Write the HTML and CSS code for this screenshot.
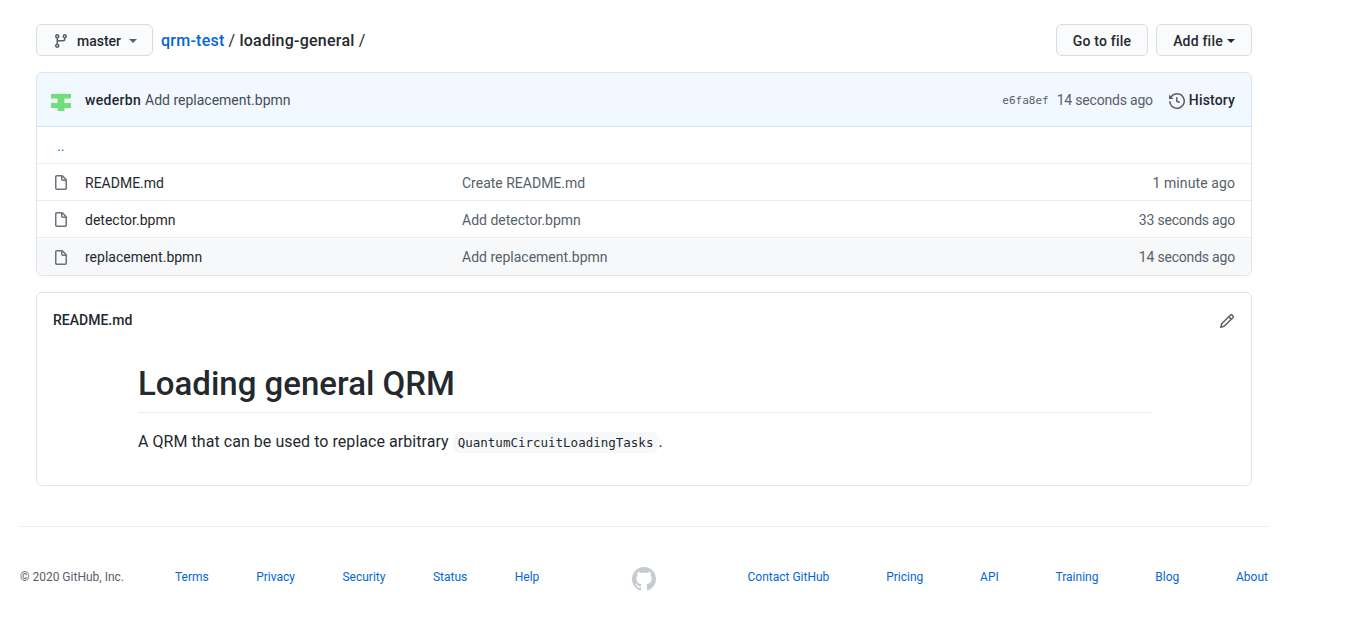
FILE: index.html
```html
<!DOCTYPE html>
<html lang="en">
<head>
<meta charset="utf-8">
<title>qrm-test/loading-general</title>
<link rel="stylesheet" href="styles.css">
</head>
<body>
<main class="repo">
  <div class="topbar">
    <div class="nav-left">
      <button class="btn branch">
        <svg class="ico" viewBox="0 0 16 16" width="16" height="16"><path fill-rule="evenodd" d="M11.75 2.5a.75.75 0 100 1.5.75.75 0 000-1.5zm-2.25.75a2.25 2.25 0 113 2.122V6A2.5 2.5 0 0110 8.5H6a1 1 0 00-1 1v1.128a2.251 2.251 0 11-1.5 0V5.372a2.25 2.25 0 111.5 0v1.836A2.492 2.492 0 016 7h4a1 1 0 001-1v-.628A2.25 2.25 0 019.5 3.25zM4.25 12a.75.75 0 100 1.5.75.75 0 000-1.5zM3.5 3.25a.75.75 0 111.5 0 .75.75 0 01-1.5 0z"/></svg>
        <span class="branch-name">master</span>
        <span class="caret caret-gap"></span>
      </button>
      <div class="crumbs"><a class="link" href="#">qrm-test</a><span class="sep">/</span><span>loading-general</span><span class="sep">/</span></div>
    </div>
    <div class="nav-right">
      <button class="btn action go">Go to file</button>
      <button class="btn action add">Add file<span class="caret"></span></button>
    </div>
  </div>

  <section class="files">
    <div class="commit">
      <svg class="avatar" viewBox="0 0 20 20" width="20" height="20"><circle cx="10" cy="10" r="10" fill="#eeeeee"/><path fill="#6fde7c" d="M0 3H20V7.500H13.300V12H20V17H13.300V20H6.700V17H0V12H6.700V7.500H0Z"/></svg>
      <a class="author" href="#">wederbn</a>
      <span class="message">Add replacement.bpmn</span>
      <span class="commit-right">
        <code class="sha">e6fa8ef</code>
        <span class="muted">14 seconds ago</span>
        <span class="history">
          <svg class="ico" viewBox="0 0 16 16" width="16" height="16"><path fill-rule="evenodd" d="M1.643 3.143L.427 1.927A.25.25 0 000 2.104V5.75c0 .138.112.25.25.25h3.646a.25.25 0 00.177-.427L2.715 4.215a6.5 6.5 0 11-1.18 4.458.75.75 0 10-1.493.154 8.001 8.001 0 101.6-5.684zM7.750 4a.75.75 0 01.75.75v2.992l2.028.812a.75.75 0 01-.557 1.392l-2.5-1A.75.75 0 017 8.25v-3.5A.75.75 0 017.75 4z"/></svg>
          <b class="history-label">History</b>
        </span>
      </span>
    </div>
    <div class="row up"><a class="link" href="#">..</a></div>
    <div class="row">
      <svg class="ico file" viewBox="0 0 16 16" width="16" height="16"><path fill-rule="evenodd" d="M3.75 1.5a.25.25 0 00-.25.25v11.5c0 .138.112.25.25.25h8.5a.25.25 0 00.25-.25V6H9.75A1.75 1.75 0 018 4.25V1.5H3.75zm5.75.56v2.19c0 .138.112.25.25.25h2.19L9.5 2.06zM2 1.75C2 .784 2.784 0 3.75 0h5.086c.464 0 .909.184 1.237.513l3.414 3.414c.329.328.513.773.513 1.237v8.086A1.75 1.75 0 0112.25 15h-8.5A1.75 1.75 0 012 13.25V1.75z"/></svg>
      <span class="name">README.md</span><span class="msg">Create README.md</span><span class="age age-min">1 minute ago</span>
    </div>
    <div class="row">
      <svg class="ico file" viewBox="0 0 16 16" width="16" height="16"><path fill-rule="evenodd" d="M3.75 1.5a.25.25 0 00-.25.25v11.5c0 .138.112.25.25.25h8.5a.25.25 0 00.25-.25V6H9.75A1.75 1.75 0 018 4.25V1.5H3.75zm5.75.56v2.19c0 .138.112.25.25.25h2.19L9.5 2.06zM2 1.75C2 .784 2.784 0 3.75 0h5.086c.464 0 .909.184 1.237.513l3.414 3.414c.329.328.513.773.513 1.237v8.086A1.75 1.75 0 0112.25 15h-8.5A1.75 1.75 0 012 13.25V1.75z"/></svg>
      <span class="name">detector.bpmn</span><span class="msg">Add detector.bpmn</span><span class="age">33 seconds ago</span>
    </div>
    <div class="row hover">
      <svg class="ico file" viewBox="0 0 16 16" width="16" height="16"><path fill-rule="evenodd" d="M3.75 1.5a.25.25 0 00-.25.25v11.5c0 .138.112.25.25.25h8.5a.25.25 0 00.25-.25V6H9.75A1.75 1.75 0 018 4.25V1.5H3.75zm5.75.56v2.19c0 .138.112.25.25.25h2.19L9.5 2.06zM2 1.75C2 .784 2.784 0 3.75 0h5.086c.464 0 .909.184 1.237.513l3.414 3.414c.329.328.513.773.513 1.237v8.086A1.75 1.75 0 0112.25 15h-8.5A1.75 1.75 0 012 13.25V1.75z"/></svg>
      <span class="name">replacement.bpmn</span><span class="msg">Add replacement.bpmn</span><span class="age">14 seconds ago</span>
    </div>
  </section>

  <section class="readme">
    <div class="readme-head">
      <strong class="readme-title">README.md</strong>
      <svg class="ico pencil" viewBox="0 0 16 16" width="16" height="16"><path fill-rule="evenodd" d="M11.013 1.427a1.75 1.75 0 012.474 0l1.086 1.086a1.75 1.75 0 010 2.474l-8.61 8.61c-.21.21-.47.364-.756.445l-3.251.93a.75.75 0 01-.927-.928l.929-3.25a1.75 1.75 0 01.445-.758l8.61-8.61zm1.414 1.06a.25.25 0 00-.354 0L10.811 3.75l1.439 1.44 1.263-1.263a.25.25 0 000-.354l-1.086-1.086zM11.189 6.25L9.75 4.81l-6.286 6.287a.25.25 0 00-.064.108l-.558 1.953 1.953-.558a.249.249 0 00.108-.064l6.286-6.286z"/></svg>
    </div>
    <article class="markdown">
      <h1 class="title">Loading general QRM</h1>
      <p class="para">A QRM that can be used to replace arbitrary <code class="inline">QuantumCircuitLoadingTasks</code>.</p>
    </article>
  </section>
</main>

<footer class="footer">
  <div class="foot-group left">
    <span class="copy">© 2020 GitHub, Inc.</span>
    <a href="#">Terms</a><a href="#">Privacy</a><a href="#">Security</a><a href="#">Status</a><a href="#">Help</a>
  </div>
  <svg class="mark" viewBox="0 0 16 16" width="24" height="24"><path fill-rule="evenodd" d="M8 0C3.58 0 0 3.58 0 8c0 3.54 2.29 6.53 5.47 7.59.4.07.55-.17.55-.38 0-.19-.01-.82-.01-1.49-2.01.37-2.53-.49-2.69-.94-.09-.23-.48-.94-.82-1.13-.28-.15-.68-.52-.01-.53.63-.01 1.08.58 1.23.82.72 1.21 1.87.87 2.33.66.07-.52.28-.87.51-1.07-1.78-.2-3.64-.89-3.64-3.95 0-.87.31-1.59.82-2.15-.08-.2-.36-1.02.08-2.12 0 0 .67-.21 2.2.82.64-.18 1.32-.27 2-.27.68 0 1.36.09 2 .27 1.53-1.04 2.2-.82 2.2-.82.44 1.1.16 1.92.08 2.12.51.56.82 1.27.82 2.15 0 3.07-1.87 3.75-3.65 3.95.29.25.54.73.54 1.48 0 1.07-.01 1.93-.01 2.2 0 .21.15.46.55.38A8.013 8.013 0 0016 8c0-4.42-3.58-8-8-8z"/></svg>
  <div class="foot-group right">
    <a href="#">Contact GitHub</a><a href="#">Pricing</a><a href="#">API</a><a href="#">Training</a><a href="#">Blog</a><a href="#">About</a>
  </div>
</footer>
</body>
</html>
```

FILE: styles.css
```css
* { box-sizing: border-box; }
html, body { margin: 0; padding: 0; }
body {
  width: 1348px;
  background: #fff;
  color: #24292e;
  font-family: Roboto, "Noto Sans", sans-serif;
  font-size: 14px;
  line-height: 21px;
}
a { text-decoration: none; color: inherit; }
.link { color: #0366d6; }
.ico { fill: #586069; flex: none; display: block; }

.repo { width: 1248px; margin-left: 20px; padding: 24px 16px 0; }
.topbar { display: flex; justify-content: space-between; align-items: center; height: 32px; margin-bottom: 16px; }
.nav-left, .nav-right { display: flex; align-items: center; }
.nav-right { gap: 8px; }

.btn {
  display: inline-flex;
  align-items: center;
  height: 32px;
  border: 1px solid #d9dcdf;
  border-radius: 6px;
  background: #fafbfc;
  color: #24292e;
  font: 500 14px/20px Roboto, "Noto Sans", sans-serif;
  padding: 2px 16px 0;
  white-space: nowrap;
}
.branch { width: 117px; }
.branch-name { margin-left: 8px; }
.caret { display: inline-block; width: 0; height: 0; margin-left: 4px; border: 4px solid transparent; border-top-color: #24292e; border-bottom: 0; }
.caret-gap { margin-left: 8px; border-top-color: #586069; }
.action { justify-content: center; letter-spacing: .2px; padding-left: 0; padding-right: 0; }
.go { width: 92px; }
.add { width: 96px; }
.crumbs { display: flex; margin-left: 8px; padding-top: 2px; font-size: 16px; font-weight: 500; line-height: 24px; letter-spacing: .25px; }
.sep { margin: 0 4px; font-weight: 400; }

.files { border: 1px solid #e1e4e8; border-radius: 6px; overflow: hidden; }
.commit {
  display: flex;
  align-items: center;
  height: 55px;
  margin: -1px -1px 0;
  padding: 2px 16px 0 14px;
  background: #f1f8ff;
  border: 1px solid #c8e1ff;
  border-radius: 6px 6px 0 0;
}
.avatar { margin-right: 14px; flex: none; }
.author { font-weight: 500; margin-right: 4px; letter-spacing: .3px; }
.message { color: #444d56; }
.commit-right { margin-left: auto; display: flex; align-items: center; }
.sha { font: 11px/18px "DejaVu Sans Mono", monospace; color: #586069; margin-right: 8px; }
.muted { color: #586069; letter-spacing: -.2px; }
.history { display: flex; align-items: center; margin-left: 16px; }
.history-label { margin-left: 4px; font-weight: 500; color: #24292e; letter-spacing: .15px; }

.row {
  display: flex;
  align-items: center;
  height: 37px;
  padding: 2px 16px 0;
  border-top: 1px solid #eaecef;
}
.row.up { border-top: 0; height: 36px; }
.row.hover { height: 38px; }
.up .link { padding-left: 4px; }
.file { margin-right: 16px; fill: #6a737d; }
.name { flex: 0 0 377px; }
.msg { color: #586069; }
.age { margin-left: auto; color: #586069; letter-spacing: -.2px; }
.age-min { letter-spacing: .1px; }
.hover { background: #f6f8fa; }

.readme { margin-top: 16px; height: 194px; border: 1px solid #e1e4e8; border-radius: 6px; }
.readme-head { display: flex; justify-content: space-between; align-items: center; height: 54px; padding: 0 16px; }
.readme-title { font-weight: 500; }
.pencil { margin-top: 2px; }
.markdown { padding: 0 100px 0 101px; }
.title {
  margin: 0;
  padding: 13px 0 4px;
  border-bottom: 1px solid #eaecef;
  font-size: 33px;
  font-weight: 500;
  line-height: 48px;
}
.para { margin: 17px 0 0; font-size: 16px; line-height: 24px; letter-spacing: .05px; }
.inline {
  display: inline-block;
  padding: 0 5px;
  background: #f6f8fa;
  border-radius: 6px;
  font: 12.5px/21px "DejaVu Sans Mono", monospace;
  letter-spacing: 0;
}

.footer {
  display: flex;
  justify-content: space-between;
  align-items: center;
  width: 1248px;
  height: 103px;
  margin: 40px 0 0 20px;
  padding-bottom: 2px;
  border-top: 1px solid #eaecef;
  font-size: 12px;
  line-height: 18px;
}
.foot-group { display: flex; }
.foot-group a { color: #0366d6; }
.left { gap: 47.5px; }
.right { gap: 56.8px; }
.copy { color: #586069; margin-right: 3.5px; }
.mark { fill: #c6cbd1; margin: 4px 0 0 2px; }
```
